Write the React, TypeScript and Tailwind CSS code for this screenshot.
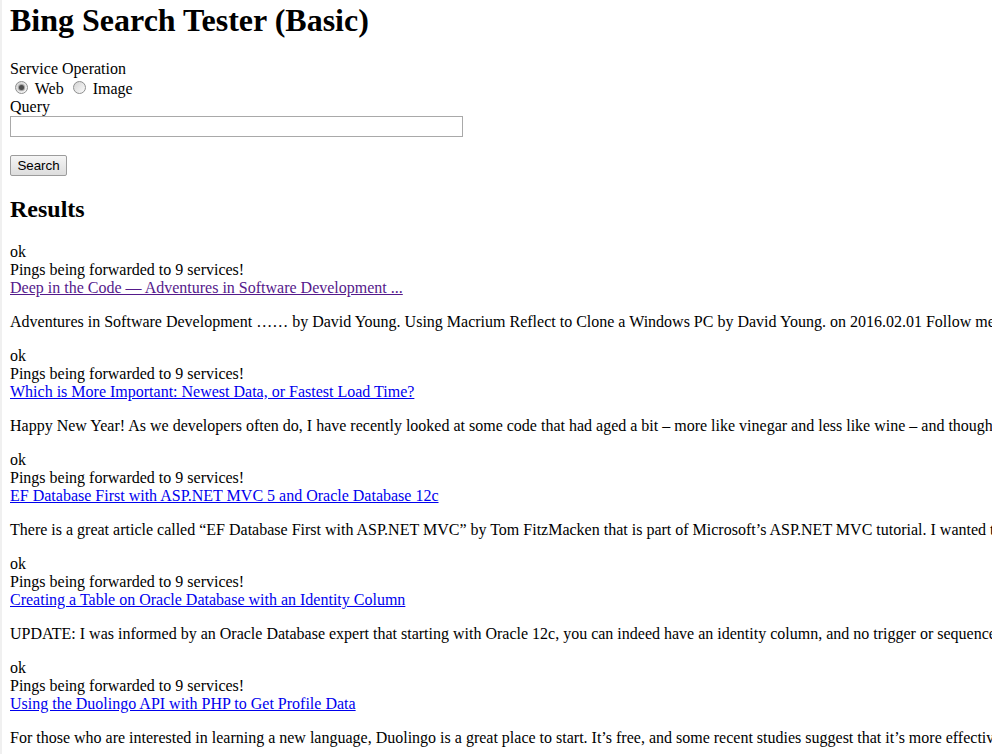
const results = [
  {
    title: 'Deep in the Code — Adventures in Software Development ...',
    visited: true,
    desc: 'Adventures in Software Development …… by David Young. Using Macrium Reflect to Clone a Windows PC by David Young. on 2016.02.01 Follow me on Twitter and read more about software development topics ...',
  },
  {
    title: 'Which is More Important: Newest Data, or Fastest Load Time?',
    visited: false,
    desc: 'Happy New Year! As we developers often do, I have recently looked at some code that had aged a bit – more like vinegar and less like wine – and thought I would share some of the lessons learned ...',
  },
  {
    title: 'EF Database First with ASP.NET MVC 5 and Oracle Database 12c',
    visited: false,
    desc: 'There is a great article called “EF Database First with ASP.NET MVC” by Tom FitzMacken that is part of Microsoft’s ASP.NET MVC tutorial. I wanted to try the same thing with Oracle ...',
  },
  {
    title: 'Creating a Table on Oracle Database with an Identity Column',
    visited: false,
    desc: 'UPDATE: I was informed by an Oracle Database expert that starting with Oracle 12c, you can indeed have an identity column, and no trigger or sequence is needed ...',
  },
  {
    title: 'Using the Duolingo API with PHP to Get Profile Data',
    visited: false,
    desc: 'For those who are interested in learning a new language, Duolingo is a great place to start. It’s free, and some recent studies suggest that it’s more effective than a college semester ...',
  },
]

function Radio({ checked }: { checked?: boolean }) {
  return (
    <span className="relative ml-[5px] mr-[3px] mt-[3px] inline-block h-[13px] w-[13px] rounded-full border border-[#8e8f8f] bg-linear-to-br from-[#d4d4d4] to-[#fbfbfb] align-baseline">
      {checked && (
        <span className="absolute left-[3px] top-[3px] h-[5px] w-[5px] rounded-full bg-[#4d4d4d] shadow-[0_0_1px_1px_#9a9a9a]" />
      )}
    </span>
  )
}

export default function App() {
  return (
    <div className="min-h-screen overflow-hidden border-l-2 border-[#f0f0f0] bg-white pl-2 pt-[2px] font-['Liberation_Serif','Times_New_Roman',serif] text-black">
      <h1 className="text-[32px] font-bold leading-[36px]">Bing Search Tester (Basic)</h1>

      {/* Form */}
      <div className="mt-[22px] text-[16px] leading-[18px]">
        <div>Service Operation</div>
        <div>
          <Radio checked /> Web <Radio /> Image
        </div>
        <div>Query</div>
        <input type="text" className="block h-[21px] w-[453px] border border-[#a9a9a9] bg-white px-[2px] outline-none" />
        <button className="mt-[18px] block h-[21px] w-[57px] rounded-[2px] border border-[#9c9c9c] bg-linear-to-b from-[#f5f5f5] to-[#dddddd] font-['Liberation_Sans',Arial,sans-serif] text-[13.33px] leading-[17px] text-black">
          Search
        </button>
      </div>

      <h2 className="mt-[19px] text-[24px] font-bold leading-[28px]">Results</h2>

      {/* Results list */}
      <div className="mt-[20px] text-[16px] leading-[18px]">
        {results.map((r) => (
          <div key={r.title}>
            <div>ok</div>
            <div>Pings being forwarded to 9 services!</div>
            <a href="#" className={`underline ${r.visited ? 'text-[#551a8b]' : 'text-[#0000ee]'}`}>
              {r.title}
            </a>
            <p className="my-4 whitespace-nowrap">{r.desc}</p>
          </div>
        ))}
      </div>
    </div>
  )
}
